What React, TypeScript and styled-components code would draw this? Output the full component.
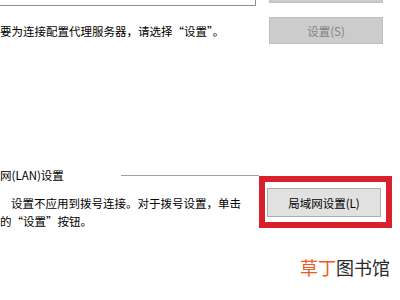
import React from "react";
import styled, { createGlobalStyle } from "styled-components";

const Global = createGlobalStyle`
  html, body {
    margin: 0;
    padding: 0;
    background: #ffffff;
    overflow: hidden;
  }
  body {
    font-family: "Noto Sans CJK SC", "Noto Sans", sans-serif;
    color: #000;
  }
`;

const Page = styled.div`
  width: 400px;
  height: 300px;
  display: flex;
  flex-direction: column;
  overflow: hidden;
  font-size: 11.5px;
  line-height: 18px;
`;

const TopStrip = styled.div`
  display: flex;
  align-items: flex-start;
  height: 6px;
`;

const InputStub = styled.div`
  width: 255px;
  height: 5px;
  border-right: 1px solid #8f8f8f;
  border-bottom: 1px solid #8f8f8f;
  box-sizing: content-box;
`;

const ButtonStub = styled.div`
  margin-left: 13px;
  width: 112px;
  height: 2px;
  background: #cccccc;
  border: 1px solid #bfbfbf;
  border-top: none;
`;

const ProxyRow = styled.div`
  display: flex;
  align-items: center;
  margin-top: 11px;
  height: 27px;
`;

const ProxyText = styled.div`
  width: 269px;
  flex: none;
  white-space: nowrap;
`;

const WinButton = styled.button<{ $disabled?: boolean; $h: number }>`
  width: 114px;
  height: ${(p) => p.$h}px;
  box-sizing: border-box;
  margin: 0;
  padding: 0;
  font-family: "Noto Sans CJK SC", "Noto Sans", sans-serif;
  font-size: 11.5px;
  line-height: 16px;
  background: ${(p) => (p.$disabled ? "#cccccc" : "#e1e1e1")};
  border: 1px solid ${(p) => (p.$disabled ? "#bfbfbf" : "#adadad")};
  color: ${(p) => (p.$disabled ? "#838383" : "#000")};
  display: flex;
  align-items: center;
  justify-content: center;
`;

const LanGroup = styled.div`
  display: flex;
  align-items: flex-start;
  margin-top: 122px;
`;

const LeftCol = styled.div`
  width: 259px;
  flex: none;
  display: flex;
  flex-direction: column;
`;

const GroupHeader = styled.div`
  display: flex;
  align-items: center;
  height: 18px;
`;

const GroupTitle = styled.span`
  white-space: nowrap;
`;

const GroupLine = styled.div`
  flex: 1;
  height: 1px;
  margin-left: 57px;
  background: #a0a0a0;
`;

const Paragraph = styled.div`
  margin-top: 10px;
  display: flex;
  flex-direction: column;
`;

const ParaLine = styled.div<{ $indent: number }>`
  padding-left: ${(p) => p.$indent}px;
  white-space: nowrap;
`;

const RedBox = styled.div`
  margin-top: 10px;
  border: 6px solid #d8212c;
  padding: 6px 5px 5px 2px;
`;

const Watermark = styled.div`
  margin-top: 27px;
  display: flex;
  justify-content: flex-end;
  padding-right: 10px;
  font-size: 18px;
  line-height: 20px;
  font-family: "Noto Sans CJK SC", sans-serif;
`;

const Mark = styled.span<{ $accent?: boolean }>`
  color: ${(p) => (p.$accent ? "#f05a22" : "#2a2a2a")};
`;

export default function App() {
  return (
    <>
      <Global />
      <Page>
        <TopStrip>
          <InputStub />
          <ButtonStub />
        </TopStrip>
        <ProxyRow>
          <ProxyText>要为连接配置代理服务器，请选择“设置”。</ProxyText>
          <WinButton $disabled $h={27} disabled>
            设置(S)
          </WinButton>
        </ProxyRow>
        <LanGroup>
          <LeftCol>
            <GroupHeader>
              <GroupTitle>网(LAN)设置</GroupTitle>
              <GroupLine />
            </GroupHeader>
            <Paragraph>
              <ParaLine $indent={11}>设置不应用到拨号连接。对于拨号设置，单击</ParaLine>
              <ParaLine $indent={0}>的“设置”按钮。</ParaLine>
            </Paragraph>
          </LeftCol>
          <RedBox>
            <WinButton $h={29}>局域网设置(L)</WinButton>
          </RedBox>
        </LanGroup>
        <Watermark>
          <Mark $accent>草丁</Mark>
          <Mark>图书馆</Mark>
        </Watermark>
      </Page>
    </>
  );
}
